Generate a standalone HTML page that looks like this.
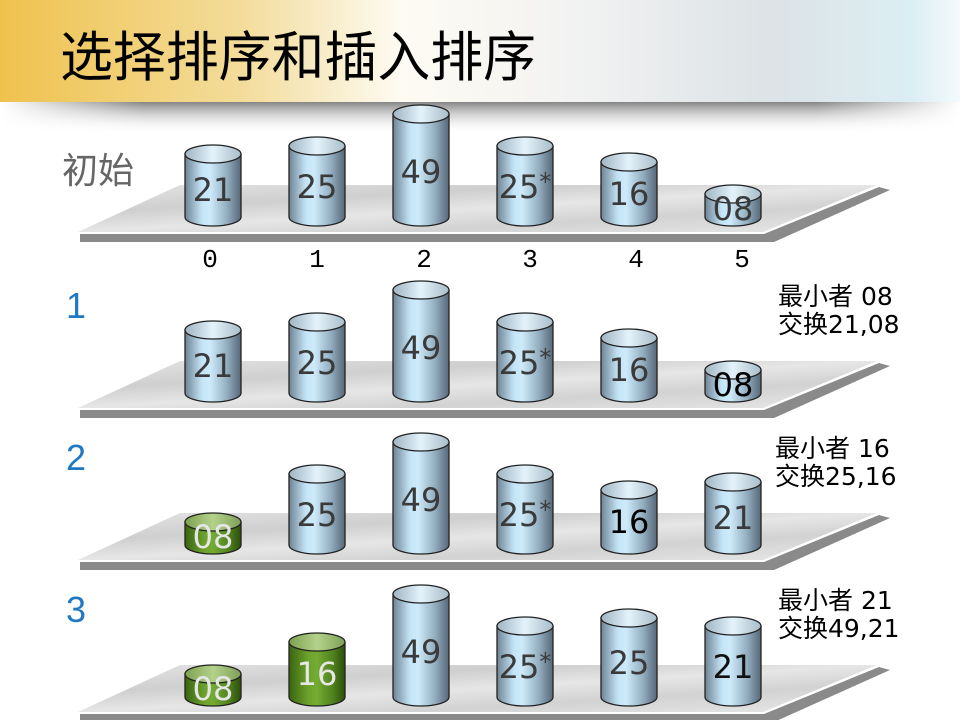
<!DOCTYPE html>
<html><head><meta charset="utf-8"><style>
html,body{margin:0;padding:0;background:#fff;}
svg{display:block;}
</style></head><body>
<svg width="960" height="720" viewBox="0 0 960 720" xmlns="http://www.w3.org/2000/svg" font-family="Liberation Sans, Noto Sans CJK SC, sans-serif">
<defs>
<linearGradient id="bar" x1="0" x2="1" y1="0" y2="0">
<stop offset="0" stop-color="#efc24e"/><stop offset="0.25" stop-color="#f3dc9a"/><stop offset="0.42" stop-color="#fdfbf3"/><stop offset="0.6" stop-color="#f2f2f2"/><stop offset="0.8" stop-color="#dde3e6"/><stop offset="0.95" stop-color="#dbeef4"/><stop offset="1" stop-color="#f4fafc"/>
</linearGradient>
<linearGradient id="shd" x1="0" x2="0" y1="0" y2="1">
<stop offset="0" stop-color="#777" stop-opacity="0.9"/><stop offset="1" stop-color="#fff" stop-opacity="0"/>
</linearGradient>
<linearGradient id="shdh" x1="0" x2="1">
<stop offset="0" stop-color="#fff" stop-opacity="1"/><stop offset="0.15" stop-color="#fff" stop-opacity="0"/><stop offset="0.85" stop-color="#fff" stop-opacity="0"/><stop offset="1" stop-color="#fff" stop-opacity="1"/>
</linearGradient>
<linearGradient id="marble" x1="0" x2="1" y1="0" y2="1">
<stop offset="0" stop-color="#e4e4e4"/><stop offset="0.3" stop-color="#cfcfcf"/><stop offset="0.5" stop-color="#e6e6e6"/><stop offset="0.7" stop-color="#d2d2d2"/><stop offset="1" stop-color="#e8e8e8"/>
</linearGradient>
<linearGradient id="cb" x1="0" x2="1">
<stop offset="0" stop-color="#6f8494"/><stop offset="0.3" stop-color="#c4e4f6"/><stop offset="0.45" stop-color="#cdeafa"/><stop offset="0.75" stop-color="#93aebf"/><stop offset="1" stop-color="#55687a"/>
</linearGradient>
<linearGradient id="ct" x1="0" x2="1">
<stop offset="0" stop-color="#9fb4c2"/><stop offset="0.5" stop-color="#e4f3fb"/><stop offset="1" stop-color="#a9bcc8"/>
</linearGradient>
<linearGradient id="gb" x1="0" x2="1">
<stop offset="0" stop-color="#3a6412"/><stop offset="0.35" stop-color="#6da32c"/><stop offset="0.5" stop-color="#74ab32"/><stop offset="0.8" stop-color="#4d7e1c"/><stop offset="1" stop-color="#2d4f0c"/>
</linearGradient>
<linearGradient id="gt" x1="0" x2="1">
<stop offset="0" stop-color="#7da050"/><stop offset="0.5" stop-color="#b4d28a"/><stop offset="1" stop-color="#7f9f58"/>
</linearGradient>
<g id="plat">
<polygon points="78,232 180,185 877,185 763,232" fill="url(#marble)"/>
<polygon points="80,234 764,234 879,187 890,190 774,242 80,242" fill="#8a8a8a"/>
</g>
</defs>

<rect x="0" y="0" width="960" height="102" fill="url(#bar)"/>
<rect x="0" y="102" width="960" height="32" fill="url(#shd)"/>
<rect x="0" y="102" width="960" height="32" fill="url(#shdh)"/>
<text x="60" y="76" font-size="54" fill="#000" textLength="476" lengthAdjust="spacingAndGlyphs">选择排序和插入排序</text>

<text x="62" y="183" font-size="36" fill="#666">初始</text>
<text x="66" y="318" font-size="36" fill="#1f78c1">1</text>
<text x="66" y="470" font-size="36" fill="#1f78c1">2</text>
<text x="66" y="622" font-size="36" fill="#1f78c1">3</text>

<g font-family="Liberation Mono, monospace" font-size="26" fill="#000" text-anchor="middle">
<text x="210" y="267">0</text><text x="317" y="267">1</text><text x="424" y="267">2</text><text x="530" y="267">3</text><text x="636" y="267">4</text><text x="742" y="267">5</text>
</g>

<g font-size="25" fill="#000" font-family="DejaVu Sans, Noto Sans CJK SC, sans-serif">
<text x="778" y="305">最小者 08</text><text x="778" y="333">交换21,08</text>
<text x="775" y="457">最小者 16</text><text x="775" y="485">交换25,16</text>
<text x="778" y="609">最小者 21</text><text x="778" y="637">交换49,21</text>
</g>

<!-- Row 0 -->
<g transform="translate(0,0)">
<use href="#plat"/>
<g stroke="#222" stroke-width="1.3">
<path d="M185,154 V217 A28,9 0 0 0 241,217 V154 Z" fill="url(#cb)"/><ellipse cx="213" cy="154" rx="28" ry="9" fill="url(#ct)"/>
<path d="M289,146 V217 A28,9 0 0 0 345,217 V146 Z" fill="url(#cb)"/><ellipse cx="317" cy="146" rx="28" ry="9" fill="url(#ct)"/>
<path d="M393,114 V217 A28,9 0 0 0 449,217 V114 Z" fill="url(#cb)"/><ellipse cx="421" cy="114" rx="28" ry="9" fill="url(#ct)"/>
<path d="M497,146 V217 A28,9 0 0 0 553,217 V146 Z" fill="url(#cb)"/><ellipse cx="525" cy="146" rx="28" ry="9" fill="url(#ct)"/>
<path d="M601,162 V217 A28,9 0 0 0 657,217 V162 Z" fill="url(#cb)"/><ellipse cx="629" cy="162" rx="28" ry="9" fill="url(#ct)"/>
<path d="M705,194 V217 A28,9 0 0 0 761,217 V194 Z" fill="url(#cb)"/><ellipse cx="733" cy="194" rx="28" ry="9" fill="url(#ct)"/>
</g>
<g font-size="32" fill="#3a3a3a" text-anchor="middle" font-family="DejaVu Sans, sans-serif">
<text x="213" y="201">21</text><text x="317" y="198">25</text><text x="421" y="183">49</text><text x="525" y="198">25<tspan font-size="24" dy="-8">*</tspan></text><text x="629" y="205">16</text><text x="733" y="220">08</text>
</g>
</g>

<!-- Row 1 -->
<g transform="translate(0,176)">
<use href="#plat"/>
<g stroke="#222" stroke-width="1.3">
<path d="M185,154 V217 A28,9 0 0 0 241,217 V154 Z" fill="url(#cb)"/><ellipse cx="213" cy="154" rx="28" ry="9" fill="url(#ct)"/>
<path d="M289,146 V217 A28,9 0 0 0 345,217 V146 Z" fill="url(#cb)"/><ellipse cx="317" cy="146" rx="28" ry="9" fill="url(#ct)"/>
<path d="M393,114 V217 A28,9 0 0 0 449,217 V114 Z" fill="url(#cb)"/><ellipse cx="421" cy="114" rx="28" ry="9" fill="url(#ct)"/>
<path d="M497,146 V217 A28,9 0 0 0 553,217 V146 Z" fill="url(#cb)"/><ellipse cx="525" cy="146" rx="28" ry="9" fill="url(#ct)"/>
<path d="M601,162 V217 A28,9 0 0 0 657,217 V162 Z" fill="url(#cb)"/><ellipse cx="629" cy="162" rx="28" ry="9" fill="url(#ct)"/>
<path d="M705,194 V217 A28,9 0 0 0 761,217 V194 Z" fill="url(#cb)"/><ellipse cx="733" cy="194" rx="28" ry="9" fill="url(#ct)"/>
</g>
<g font-size="32" fill="#3a3a3a" text-anchor="middle" font-family="DejaVu Sans, sans-serif">
<text x="213" y="201">21</text><text x="317" y="198">25</text><text x="421" y="183">49</text><text x="525" y="198">25<tspan font-size="24" dy="-8">*</tspan></text><text x="629" y="205">16</text><text x="733" y="220" fill="#000">08</text>
</g>
</g>

<!-- Row 2 -->
<g transform="translate(0,328)">
<use href="#plat"/>
<g stroke="#222" stroke-width="1.3">
<path d="M185,194 V217 A28,9 0 0 0 241,217 V194 Z" fill="url(#gb)"/><ellipse cx="213" cy="194" rx="28" ry="9" fill="url(#gt)"/>
<path d="M289,146 V217 A28,9 0 0 0 345,217 V146 Z" fill="url(#cb)"/><ellipse cx="317" cy="146" rx="28" ry="9" fill="url(#ct)"/>
<path d="M393,114 V217 A28,9 0 0 0 449,217 V114 Z" fill="url(#cb)"/><ellipse cx="421" cy="114" rx="28" ry="9" fill="url(#ct)"/>
<path d="M497,146 V217 A28,9 0 0 0 553,217 V146 Z" fill="url(#cb)"/><ellipse cx="525" cy="146" rx="28" ry="9" fill="url(#ct)"/>
<path d="M601,162 V217 A28,9 0 0 0 657,217 V162 Z" fill="url(#cb)"/><ellipse cx="629" cy="162" rx="28" ry="9" fill="url(#ct)"/>
<path d="M705,154 V217 A28,9 0 0 0 761,217 V154 Z" fill="url(#cb)"/><ellipse cx="733" cy="154" rx="28" ry="9" fill="url(#ct)"/>
</g>
<g font-size="32" fill="#3a3a3a" text-anchor="middle" font-family="DejaVu Sans, sans-serif">
<text x="213" y="220" fill="#e6e6e6">08</text><text x="317" y="198">25</text><text x="421" y="183">49</text><text x="525" y="198">25<tspan font-size="24" dy="-8">*</tspan></text><text x="629" y="205" fill="#000">16</text><text x="733" y="201">21</text>
</g>
</g>

<!-- Row 3 -->
<g transform="translate(0,480)">
<use href="#plat"/>
<g stroke="#222" stroke-width="1.3">
<path d="M185,194 V217 A28,9 0 0 0 241,217 V194 Z" fill="url(#gb)"/><ellipse cx="213" cy="194" rx="28" ry="9" fill="url(#gt)"/>
<path d="M289,162 V217 A28,9 0 0 0 345,217 V162 Z" fill="url(#gb)"/><ellipse cx="317" cy="162" rx="28" ry="9" fill="url(#gt)"/>
<path d="M393,114 V217 A28,9 0 0 0 449,217 V114 Z" fill="url(#cb)"/><ellipse cx="421" cy="114" rx="28" ry="9" fill="url(#ct)"/>
<path d="M497,146 V217 A28,9 0 0 0 553,217 V146 Z" fill="url(#cb)"/><ellipse cx="525" cy="146" rx="28" ry="9" fill="url(#ct)"/>
<path d="M601,138 V217 A28,9 0 0 0 657,217 V138 Z" fill="url(#cb)"/><ellipse cx="629" cy="138" rx="28" ry="9" fill="url(#ct)"/>
<path d="M705,146 V217 A28,9 0 0 0 761,217 V146 Z" fill="url(#cb)"/><ellipse cx="733" cy="146" rx="28" ry="9" fill="url(#ct)"/>
</g>
<g font-size="32" fill="#3a3a3a" text-anchor="middle" font-family="DejaVu Sans, sans-serif">
<text x="213" y="220" fill="#e6e6e6">08</text><text x="317" y="205" fill="#e6e6e6">16</text><text x="421" y="183">49</text><text x="525" y="198">25<tspan font-size="24" dy="-8">*</tspan></text><text x="629" y="194">25</text><text x="733" y="198" fill="#111">21</text>
</g>
</g>
</svg>
</body></html>
